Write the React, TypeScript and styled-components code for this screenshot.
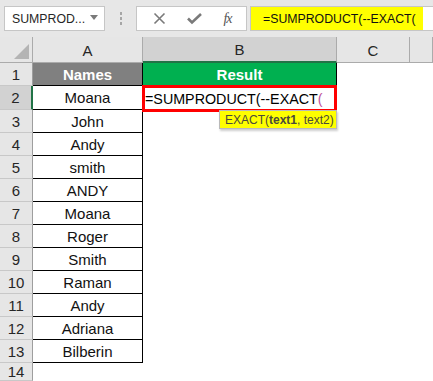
import React from "react";
import styled, { createGlobalStyle } from "styled-components";

const GlobalStyle = createGlobalStyle`
  html, body {
    margin: 0;
    padding: 0;
    background: #ffffff;
  }
  body {
    font-family: "Liberation Sans", Arial, sans-serif;
    width: 433px;
    height: 381px;
    overflow: hidden;
  }
`;

const Window = styled.div`
  width: 433px;
  height: 381px;
  overflow: hidden;
  background: #ffffff;
`;

const Toolbar = styled.div`
  height: 37px;
  background: #e7e7e7;
  display: flex;
  align-items: flex-start;
  padding: 6px 0 0 4px;
  box-sizing: border-box;
`;

const NameBox = styled.div`
  width: 101px;
  height: 25px;
  box-sizing: border-box;
  background: #ffffff;
  border: 1px solid #c6c6c6;
  display: flex;
  align-items: center;
  justify-content: space-between;
  padding: 0 6px 0 7px;
  font-size: 12.3px;
  color: #262626;
  white-space: nowrap;
`;

const Caret = styled.span`
  width: 0;
  height: 0;
  border-left: 4px solid transparent;
  border-right: 4px solid transparent;
  border-top: 5px solid #7a7a7a;
  margin-top: -2px;
`;

const Grip = styled.div`
  width: 31px;
  height: 25px;
  display: flex;
  flex-direction: column;
  align-items: center;
  justify-content: center;
  gap: 2px;
`;

const GripDot = styled.span`
  width: 2px;
  height: 3px;
  background: #a6a6a6;
`;

const ButtonBox = styled.div`
  width: 111px;
  height: 25px;
  box-sizing: border-box;
  background: #ffffff;
  border: 1px solid #c6c6c6;
  display: flex;
  align-items: center;
  justify-content: space-around;
  padding: 0 4px 0 6px;
`;

const Fx = styled.span`
  font-family: "Liberation Serif", "Times New Roman", serif;
  font-style: italic;
  font-size: 14px;
  color: #555555;
  letter-spacing: -1px;
`;

const FormulaBar = styled.div`
  flex: 1;
  margin-left: 3px;
  height: 25px;
  box-sizing: border-box;
  background: #ffffff;
  border: 1px solid #c6c6c6;
  border-right: none;
  padding: 0 10px 0 0;
  display: flex;
`;

const FormulaText = styled.div`
  flex: 1;
  background: #ffff00;
  font-size: 12.3px;
  color: #111111;
  display: flex;
  align-items: center;
  padding-left: 12px;
  white-space: nowrap;
  overflow: hidden;
`;

const Sheet = styled.div`
  display: grid;
  grid-template-columns: 33px 110px 194px 73px 1fr;
  grid-template-rows: 26px 23px 24px repeat(11, 23px) 1fr;
  height: 344px;
`;

const Corner = styled.div`
  background: #e6e6e6;
  border-right: 1px solid #ababab;
  border-bottom: 1px solid #ababab;
  box-sizing: border-box;
  display: flex;
  align-items: flex-end;
  justify-content: flex-end;
  padding: 0 3px 3px 0;
`;

const CornerTriangle = styled.span`
  width: 0;
  height: 0;
  border-left: 15px solid transparent;
  border-bottom: 15px solid #b4b4b4;
`;

const ColHead = styled.div<{ $active?: boolean }>`
  background: ${({ $active }) => ($active ? "#d2d2d2" : "#e6e6e6")};
  border-right: 1px solid #ababab;
  border-bottom: ${({ $active }) => ($active ? "2px solid #217346" : "1px solid #ababab")};
  box-sizing: border-box;
  display: flex;
  align-items: center;
  justify-content: center;
  font-size: 15px;
  color: #262626;
  padding-top: 1px;
`;

const RowHead = styled.div<{ $active?: boolean }>`
  background: ${({ $active }) => ($active ? "#d2d2d2" : "#e6e6e6")};
  border-right: ${({ $active }) => ($active ? "2px solid #217346" : "1px solid #9e9e9e")};
  border-bottom: 1px solid #c8c8c8;
  box-sizing: border-box;
  display: flex;
  align-items: center;
  justify-content: center;
  font-size: 15px;
  color: #262626;
`;

const NameCell = styled.div<{ $head?: boolean }>`
  background: ${({ $head }) => ($head ? "#808080" : "#ffffff")};
  color: ${({ $head }) => ($head ? "#ffffff" : "#111111")};
  font-weight: ${({ $head }) => ($head ? 700 : 400)};
  border-right: 1px solid #000000;
  border-bottom: 1px solid #000000;
  box-sizing: border-box;
  display: flex;
  align-items: center;
  justify-content: center;
  font-size: 15px;
`;

const ResultHead = styled.div`
  background: #00b050;
  color: #ffffff;
  font-weight: 700;
  font-size: 15px;
  border-right: 1px solid #000000;
  box-sizing: border-box;
  display: flex;
  align-items: center;
  justify-content: center;
`;

const Blank = styled.div`
  background: #ffffff;
`;

const ActiveCell = styled.div`
  position: relative;
  margin: -1px 0 -2px -1px;
  border: 3px solid #ff0000;
  background: #ffffff;
  display: flex;
  align-items: center;
  font-size: 14.3px;
  color: #000000;
  z-index: 2;
  white-space: nowrap;
`;

const Paren = styled.span`
  color: #c0509a;
`;

const Tip = styled.div`
  position: absolute;
  top: 22px;
  left: 74px;
  width: 118px;
  height: 19px;
  box-sizing: border-box;
  padding: 0 0 0 5px;
  background: #ffff00;
  border: 1px solid #b9b9b9;
  box-shadow: 1px 2px 2px rgba(0, 0, 0, 0.2);
  font-size: 12px;
  color: #4a4a3a;
  display: flex;
  align-items: center;
  white-space: nowrap;
`;

const names = [
  "Moana",
  "John",
  "Andy",
  "smith",
  "ANDY",
  "Moana",
  "Roger",
  "Smith",
  "Raman",
  "Andy",
  "Adriana",
  "Bilberin",
];

const XIcon = () => (
  <svg width="13" height="13" viewBox="0 0 13 13">
    <path d="M1.5 1.5 L11.5 11.5 M11.5 1.5 L1.5 11.5" stroke="#7a7a7a" strokeWidth="1.6" fill="none" />
  </svg>
);

const CheckIcon = () => (
  <svg width="15" height="13" viewBox="0 0 15 13">
    <path d="M1 6.5 L5 10.5 L14 2" stroke="#7a7a7a" strokeWidth="2.6" fill="none" />
  </svg>
);

export default function App() {
  return (
    <Window>
      <GlobalStyle />
      <Toolbar>
        <NameBox>
          SUMPROD...
          <Caret />
        </NameBox>
        <Grip>
          <GripDot />
          <GripDot />
          <GripDot />
        </Grip>
        <ButtonBox>
          <XIcon />
          <CheckIcon />
          <Fx>fx</Fx>
        </ButtonBox>
        <FormulaBar>
          <FormulaText>=SUMPRODUCT(--EXACT(</FormulaText>
        </FormulaBar>
      </Toolbar>
      <Sheet>
        <Corner>
          <CornerTriangle />
        </Corner>
        <ColHead>A</ColHead>
        <ColHead $active>B</ColHead>
        <ColHead>C</ColHead>
        <ColHead />

        <RowHead>1</RowHead>
        <NameCell $head>Names</NameCell>
        <ResultHead>Result</ResultHead>
        <Blank />
        <Blank />

        <RowHead $active>2</RowHead>
        <NameCell>{names[0]}</NameCell>
        <ActiveCell>
          =SUMPRODUCT(--EXACT<Paren>(</Paren>
          <Tip>
            EXACT(<b>text1</b>, text2)
          </Tip>
        </ActiveCell>
        <Blank />
        <Blank />

        {names.slice(1).map((n, i) => (
          <React.Fragment key={i}>
            <RowHead>{i + 3}</RowHead>
            <NameCell>{n}</NameCell>
            <Blank />
            <Blank />
            <Blank />
          </React.Fragment>
        ))}

        <RowHead>14</RowHead>
        <Blank />
        <Blank />
        <Blank />
        <Blank />
      </Sheet>
    </Window>
  );
}
